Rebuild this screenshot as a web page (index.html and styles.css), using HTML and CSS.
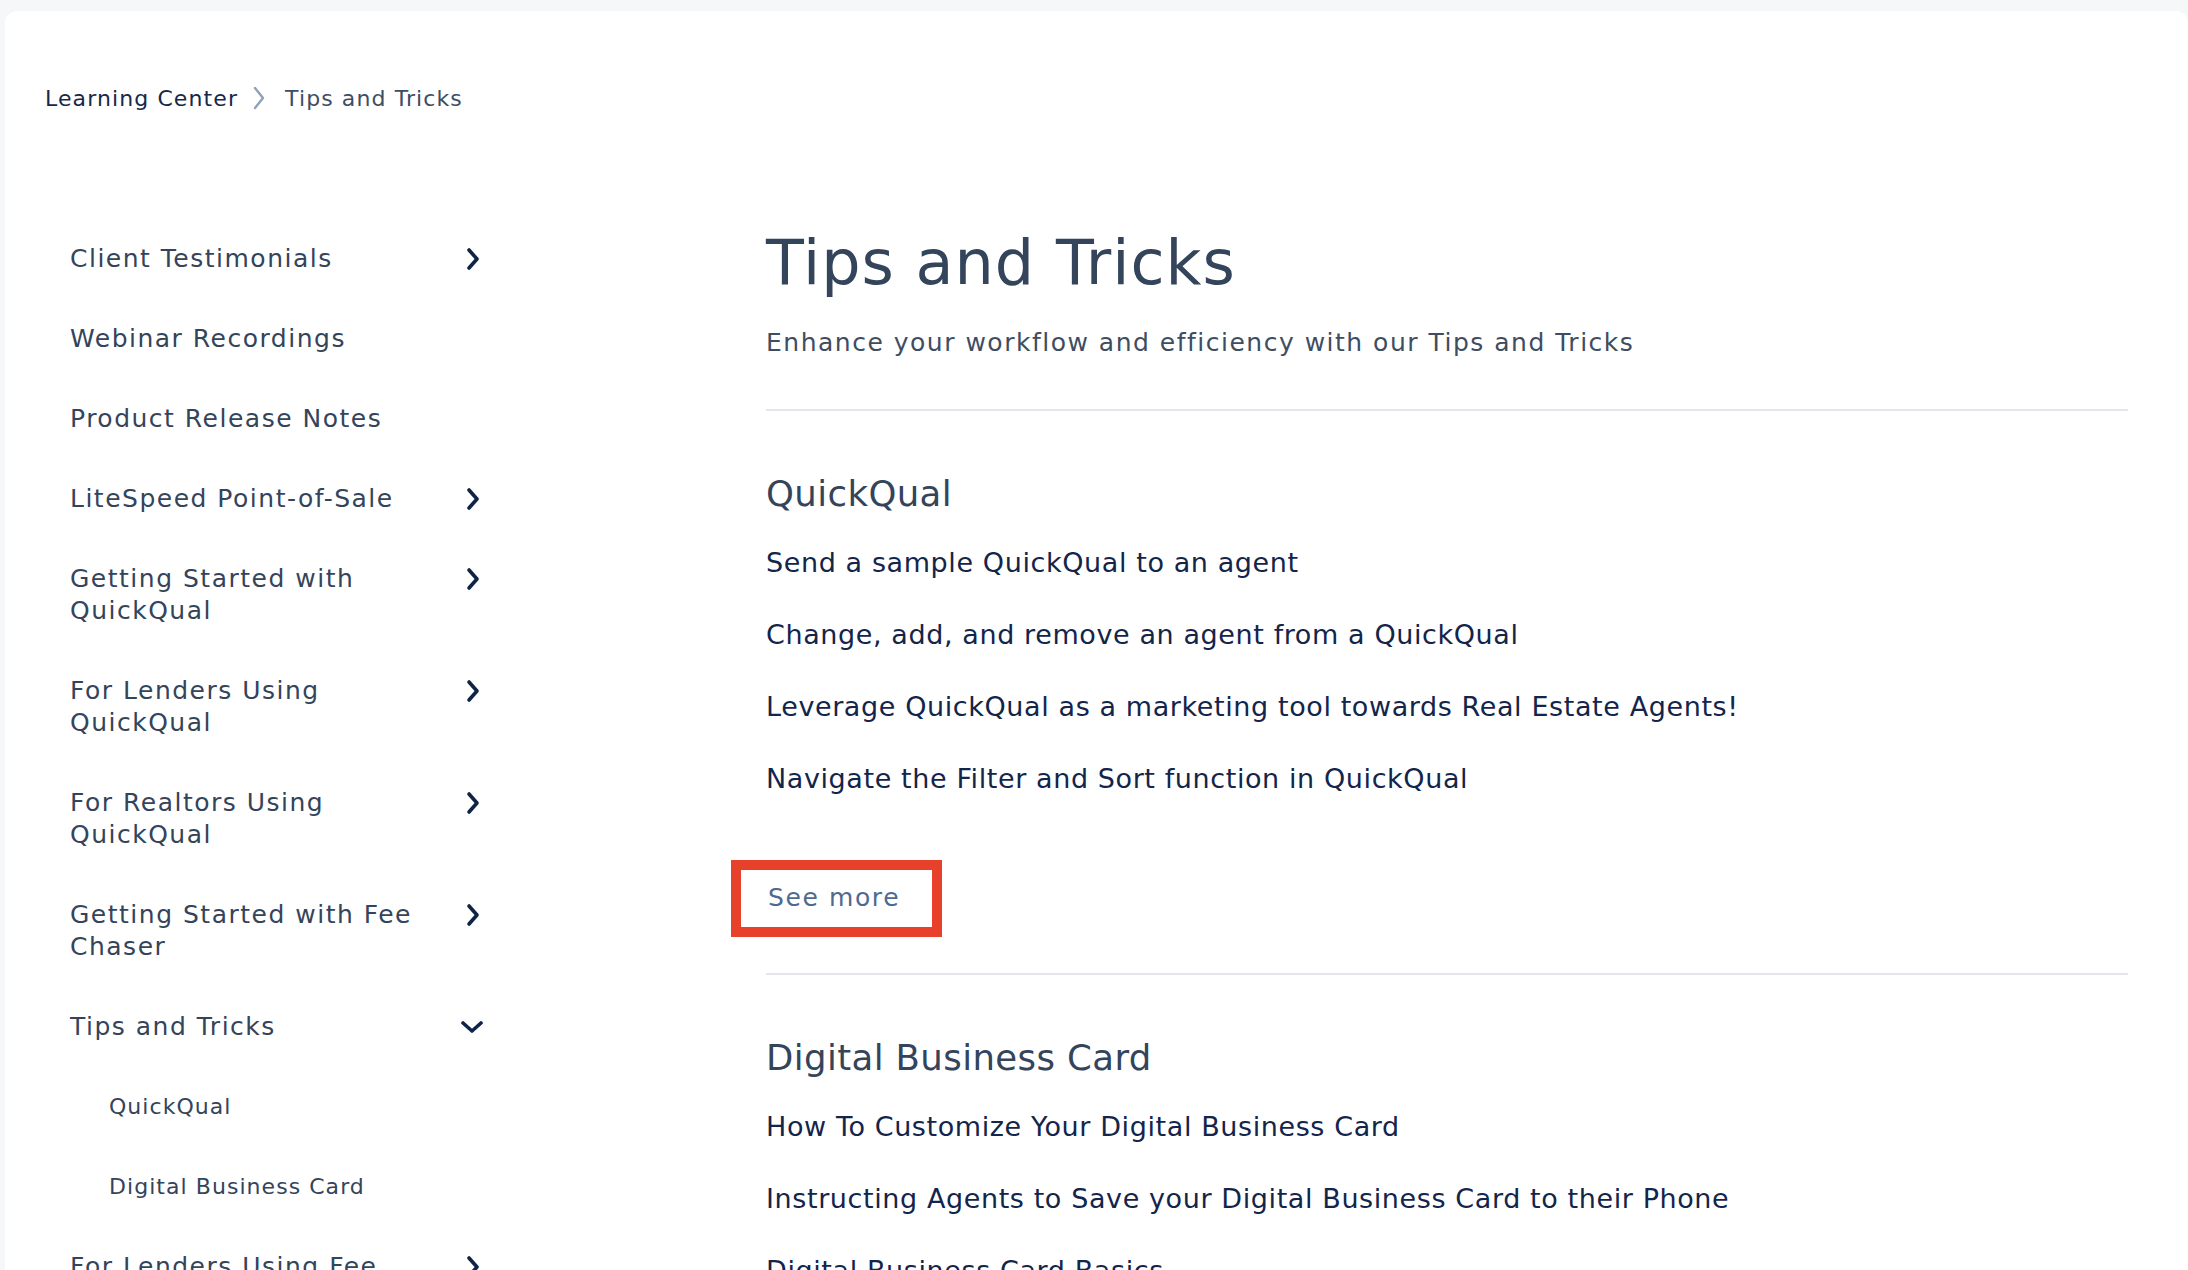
FILE: index.html
```html
<!DOCTYPE html>
<html lang="en">

<head>
	<meta charset="UTF-8">
	<meta name="viewport" content="width=device-width, initial-scale=1.0">
	<title>Tips and Tricks - Learning Center</title>
	<link rel="stylesheet" href="styles.css">
</head>

<body>
	<div class="card">
		<nav class="breadcrumb">
			<a href="#" class="crumb-home">Learning Center</a>
			<svg class="crumb-sep" width="12" height="24" viewBox="0 0 12 24"><polyline points="2,2 10,12 2,22" /></svg>
			<span class="crumb-current">Tips and Tricks</span>
		</nav>

		<div class="layout">
			<aside class="sidebar">
				<ul class="nav">
					<li class="nav-item">
						<span class="nav-label">Client Testimonials</span>
						<svg class="chev" width="14" height="24" viewBox="0 0 14 24"><polyline points="3,3 11,12 3,21" /></svg>
					</li>
					<li class="nav-item"><span class="nav-label">Webinar Recordings</span></li>
					<li class="nav-item"><span class="nav-label">Product Release Notes</span></li>
					<li class="nav-item">
						<span class="nav-label">LiteSpeed Point-of-Sale</span>
						<svg class="chev" width="14" height="24" viewBox="0 0 14 24"><polyline points="3,3 11,12 3,21" /></svg>
					</li>
					<li class="nav-item">
						<span class="nav-label">Getting Started with QuickQual</span>
						<svg class="chev" width="14" height="24" viewBox="0 0 14 24"><polyline points="3,3 11,12 3,21" /></svg>
					</li>
					<li class="nav-item">
						<span class="nav-label">For Lenders Using QuickQual</span>
						<svg class="chev" width="14" height="24" viewBox="0 0 14 24"><polyline points="3,3 11,12 3,21" /></svg>
					</li>
					<li class="nav-item">
						<span class="nav-label">For Realtors Using QuickQual</span>
						<svg class="chev" width="14" height="24" viewBox="0 0 14 24"><polyline points="3,3 11,12 3,21" /></svg>
					</li>
					<li class="nav-item">
						<span class="nav-label">Getting Started with Fee Chaser</span>
						<svg class="chev" width="14" height="24" viewBox="0 0 14 24"><polyline points="3,3 11,12 3,21" /></svg>
					</li>
					<li class="nav-item">
						<span class="nav-label">Tips and Tricks</span>
						<svg class="chev chev-down" width="22" height="24" viewBox="0 0 22 24"><polyline points="2,8 11,16 20,8" /></svg>
					</li>
					<li class="nav-sub">QuickQual</li>
					<li class="nav-sub">Digital Business Card</li>
					<li class="nav-item">
						<span class="nav-label">For Lenders Using Fee Chaser</span>
						<svg class="chev" width="14" height="24" viewBox="0 0 14 24"><polyline points="3,3 11,12 3,21" /></svg>
					</li>
				</ul>
			</aside>

			<main class="content">
				<header class="intro">
					<h1>Tips and Tricks</h1>
					<p class="lead">Enhance your workflow and efficiency with our Tips and Tricks</p>
				</header>

				<section class="topic">
					<h2>QuickQual</h2>
					<ul class="articles">
						<li><a href="#">Send a sample QuickQual to an agent</a></li>
						<li><a href="#">Change, add, and remove an agent from a QuickQual</a></li>
						<li><a href="#">Leverage QuickQual as a marketing tool towards Real Estate Agents!</a></li>
						<li><a href="#">Navigate the Filter and Sort function in QuickQual</a></li>
					</ul>
					<a href="#" class="see-more">See more</a>
				</section>

				<section class="topic">
					<h2>Digital Business Card</h2>
					<ul class="articles">
						<li><a href="#">How To Customize Your Digital Business Card</a></li>
						<li><a href="#">Instructing Agents to Save your Digital Business Card to their Phone</a></li>
						<li><a href="#">Digital Business Card Basics</a></li>
					</ul>
				</section>
			</main>
		</div>
	</div>
</body>

</html>
```

FILE: styles.css
```css
body {
	margin: 0;
	background-color: #f6f7f9;
	font-family: "DejaVu Sans", "Noto Sans", sans-serif;
	color: #34445a;
	overflow: hidden;
}

a {
	text-decoration: none;
	color: inherit;
}

ul {
	list-style: none;
	margin: 0;
	padding: 0;
}

.card {
	margin: 11px 0 0 5px;
	background: white;
	border-radius: 12px 12px 0 0;
	padding: 71px 60px 0 40px;
	min-height: 1300px;
}

/* breadcrumb */
.breadcrumb {
	display: flex;
	align-items: center;
	height: 32px;
	font-size: 22px;
	letter-spacing: 1.1px;
}

.crumb-home {
	color: #15284b;
}

.crumb-sep {
	margin: 0 20px 0 15px;
	fill: none;
	stroke: #8ea2bd;
	stroke-width: 2.4;
	stroke-linecap: round;
	stroke-linejoin: round;
}

.crumb-current {
	color: #3d4d63;
}

/* layout */
.layout {
	display: flex;
	margin-top: 105px;
}

.sidebar {
	width: 410px;
	padding: 0 25px;
	flex-shrink: 0;
}

.content {
	flex: 1;
	margin-left: 261px;
	padding-top: 7px;
}

/* sidebar nav */
.nav-item {
	display: flex;
	justify-content: space-between;
	align-items: flex-start;
	padding: 24px 0;
	font-size: 25px;
	line-height: 32px;
	letter-spacing: 1.5px;
	color: #34445a;
}

.nav-label {
	max-width: 365px;
}

.chev {
	margin-top: 4px;
	flex-shrink: 0;
	fill: none;
	stroke: #0f2347;
	stroke-width: 3.6;
	stroke-linecap: round;
	stroke-linejoin: round;
}

.chev-down {
	margin-right: -3px;
}

.nav-sub {
	padding: 24px 0 24px 39px;
	font-size: 22px;
	line-height: 32px;
	letter-spacing: 1.05px;
	color: #34445a;
}

/* main content */
.intro {
	padding-bottom: 50px;
}

h1 {
	margin: 0;
	font-size: 62px;
	line-height: 74px;
	font-weight: 500;
	letter-spacing: 1px;
	color: #33445b;
}

.lead {
	margin: 27px 0 0;
	font-size: 25px;
	line-height: 32px;
	letter-spacing: 1.5px;
	color: #3e4d61;
}

.topic {
	border-top: 2px solid #e2e5ea;
	padding-top: 61px;
}

h2 {
	margin: 0;
	font-size: 35.5px;
	line-height: 44px;
	font-weight: 500;
	letter-spacing: 0.4px;
	color: #34445a;
}

.articles {
	margin-top: 11px;
}

.articles li {
	padding: 18px 0;
	font-size: 27px;
	line-height: 36px;
	letter-spacing: 0.6px;
}

.articles a {
	color: #13254a;
}

.see-more {
	display: inline-block;
	margin: 45px 0 36px -35px;
	padding: 12px 32px 13px 27px;
	border: 10px solid #e8412b;
	font-size: 25px;
	line-height: 32px;
	letter-spacing: 1.6px;
	color: #4f6a8f;
}
```
